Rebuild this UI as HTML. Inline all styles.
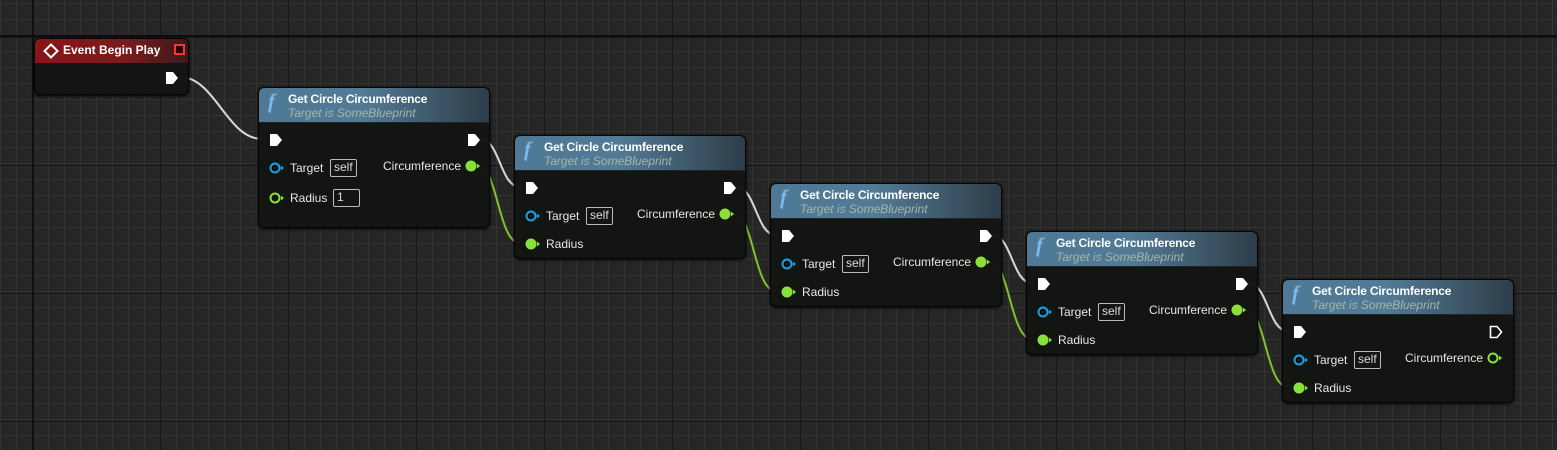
<!DOCTYPE html>
<html><head><meta charset="utf-8"><style>
*{margin:0;padding:0;box-sizing:border-box}
body{width:1557px;height:450px;overflow:hidden;background:#262626;position:relative;font-family:"Liberation Sans",sans-serif;
background-image:
linear-gradient(90deg,#0e0e0e 0,#0e0e0e 2px,transparent 2px),
linear-gradient(0deg,#0e0e0e 0,#0e0e0e 2px,transparent 2px),
linear-gradient(90deg,#171717 1px,transparent 1px),
linear-gradient(0deg,transparent 127px,#171717 127px),
linear-gradient(90deg,#333 1px,transparent 1px),
linear-gradient(0deg,#333 1px,transparent 1px);
background-size:2px 450px,1557px 2px,128px 128px,128px 128px,16px 16px,16px 16px;
background-position:32px 0,0 35px,32px 0,0 37px,0 4px,0 4px;
background-repeat:no-repeat,no-repeat,repeat,repeat,repeat,repeat;}
.n{position:absolute;width:232px;height:124px;background:rgba(19,21,19,.97);border:1px solid #050505;border-radius:6px;box-shadow:0 1px 3px #000}
.n .h{height:35px;border-radius:5px 5px 0 0;background:linear-gradient(90deg,#4e7895 0%,#537b96 45%,#2d3d48 100%);position:relative;border-bottom:1px solid #222}
.n .f{position:absolute;left:9px;top:1px;color:#7ab8ee;font-family:"Liberation Serif",serif;font-style:italic;font-size:21px;font-weight:bold}
.n .t{position:absolute;left:29px;top:4px;color:#fff;font-size:12px;font-weight:bold;letter-spacing:-.2px}
.n .s{position:absolute;left:29px;top:18px;color:#a5b6a5;font-size:12px;font-style:italic}
.l{position:absolute;color:#e6e6e6;font-size:12px}
.b{position:absolute;border:1px solid #bbb;color:#ddd;font-size:12px;height:18px;line-height:15px;padding:0 3px;border-radius:2px}
svg.p{position:absolute}
</style></head><body>
<svg width="1557" height="450" style="position:absolute;left:0;top:0">
<g fill="none" stroke-width="2">
<path d="M180 77 C215 77,227 139,262 139" stroke="#d8d8d8"/>
<path d="M480 139 C500 139,500 187,520 187" stroke="#d8d8d8"/>
<path d="M736 187 C756 187,756 235,776 235" stroke="#d8d8d8"/>
<path d="M992 235 C1012 235,1012 283,1032 283" stroke="#d8d8d8"/>
<path d="M1248 283 C1268 283,1268 331,1288 331" stroke="#d8d8d8"/>
<path d="M478 166 C498 166,498 243,520 243" stroke="#7fc42a"/>
<path d="M734 214 C754 214,754 291,776 291" stroke="#7fc42a"/>
<path d="M990 262 C1010 262,1010 339,1032 339" stroke="#7fc42a"/>
<path d="M1246 310 C1266 310,1266 387,1288 387" stroke="#7fc42a"/>
</g></svg>

<div class="n" style="left:34px;top:38px;width:155px;height:57px">
<div style="height:24px;border-radius:5px 5px 0 0;background:linear-gradient(90deg,#8a1418,#7a1a1c 60%,#3a1a1a)"></div>
<svg class="p" style="left:8px;top:4px" width="16" height="16"><path d="M8 1.5L14.5 8 8 14.5 1.5 8Z" fill="none" stroke="#fff" stroke-width="2"/></svg>
<div class="l" style="left:28px;top:4px;font-weight:bold;color:#fff">Event Begin Play</div>
<div style="position:absolute;left:139px;top:5px;width:11px;height:11px;border:2px solid #f33;background:#200"></div>
<svg class="p" style="left:130px;top:32px" width="14" height="14"><path d="M1 1H8L13 7 8 13H1Z" fill="#fff"/></svg>
</div>

<div class="n" style="left:258px;top:87px;height:141px">
<div class="h"><div class="f">f</div><div class="t">Get Circle Circumference</div><div class="s">Target is SomeBlueprint</div></div>
<svg class="p" style="left:10px;top:45px" width="14" height="14"><path d="M1 1H8L13 7 8 13H1Z" fill="#fff"/></svg>
<svg class="p" style="left:208px;top:45px" width="14" height="14"><path d="M1 1H8L13 7 8 13H1Z" fill="#fff"/></svg>
<svg class="p" style="left:10px;top:74px" width="16" height="12"><circle cx="6" cy="6" r="4.5" fill="none" stroke="#1d9fe6" stroke-width="2"/><path d="M12 3.5L15 6 12 8.5Z" fill="#1d9fe6"/></svg>
<div class="l" style="left:31px;top:73px">Target</div><div class="b" style="left:71px;top:71px">self</div>
<svg class="p" style="left:10px;top:104px" width="16" height="12"><circle cx="6" cy="6" r="4.5" fill="none" stroke="#8ae03a" stroke-width="2"/><path d="M12 3.5L15 6 12 8.5Z" fill="#8ae03a"/></svg>
<div class="l" style="left:31px;top:103px">Radius</div><div class="b" style="left:74px;top:101px;width:27px">1</div>
<div class="l" style="left:124px;top:71px">Circumference</div>
<svg class="p" style="left:206px;top:72px" width="16" height="12"><circle cx="6" cy="6" r="5.5" fill="#8ae03a"/><path d="M12 3.5L15 6 12 8.5Z" fill="#8ae03a"/></svg>
</div>

<div class="n" style="left:514px;top:135px">
<div class="h"><div class="f">f</div><div class="t">Get Circle Circumference</div><div class="s">Target is SomeBlueprint</div></div>
<svg class="p" style="left:10px;top:45px" width="14" height="14"><path d="M1 1H8L13 7 8 13H1Z" fill="#fff"/></svg>
<svg class="p" style="left:208px;top:45px" width="14" height="14"><path d="M1 1H8L13 7 8 13H1Z" fill="#fff"/></svg>
<svg class="p" style="left:10px;top:74px" width="16" height="12"><circle cx="6" cy="6" r="4.5" fill="none" stroke="#1d9fe6" stroke-width="2"/><path d="M12 3.5L15 6 12 8.5Z" fill="#1d9fe6"/></svg>
<div class="l" style="left:31px;top:73px">Target</div><div class="b" style="left:71px;top:71px">self</div>
<svg class="p" style="left:10px;top:102px" width="16" height="12"><circle cx="6" cy="6" r="5.5" fill="#8ae03a"/><path d="M12 3.5L15 6 12 8.5Z" fill="#8ae03a"/></svg>
<div class="l" style="left:31px;top:101px">Radius</div>
<div class="l" style="left:122px;top:71px">Circumference</div>
<svg class="p" style="left:204px;top:72px" width="16" height="12"><circle cx="6" cy="6" r="5.5" fill="#8ae03a"/><path d="M12 3.5L15 6 12 8.5Z" fill="#8ae03a"/></svg>
</div>
<div class="n" style="left:770px;top:183px">
<div class="h"><div class="f">f</div><div class="t">Get Circle Circumference</div><div class="s">Target is SomeBlueprint</div></div>
<svg class="p" style="left:10px;top:45px" width="14" height="14"><path d="M1 1H8L13 7 8 13H1Z" fill="#fff"/></svg>
<svg class="p" style="left:208px;top:45px" width="14" height="14"><path d="M1 1H8L13 7 8 13H1Z" fill="#fff"/></svg>
<svg class="p" style="left:10px;top:74px" width="16" height="12"><circle cx="6" cy="6" r="4.5" fill="none" stroke="#1d9fe6" stroke-width="2"/><path d="M12 3.5L15 6 12 8.5Z" fill="#1d9fe6"/></svg>
<div class="l" style="left:31px;top:73px">Target</div><div class="b" style="left:71px;top:71px">self</div>
<svg class="p" style="left:10px;top:102px" width="16" height="12"><circle cx="6" cy="6" r="5.5" fill="#8ae03a"/><path d="M12 3.5L15 6 12 8.5Z" fill="#8ae03a"/></svg>
<div class="l" style="left:31px;top:101px">Radius</div>
<div class="l" style="left:122px;top:71px">Circumference</div>
<svg class="p" style="left:204px;top:72px" width="16" height="12"><circle cx="6" cy="6" r="5.5" fill="#8ae03a"/><path d="M12 3.5L15 6 12 8.5Z" fill="#8ae03a"/></svg>
</div>
<div class="n" style="left:1026px;top:231px">
<div class="h"><div class="f">f</div><div class="t">Get Circle Circumference</div><div class="s">Target is SomeBlueprint</div></div>
<svg class="p" style="left:10px;top:45px" width="14" height="14"><path d="M1 1H8L13 7 8 13H1Z" fill="#fff"/></svg>
<svg class="p" style="left:208px;top:45px" width="14" height="14"><path d="M1 1H8L13 7 8 13H1Z" fill="#fff"/></svg>
<svg class="p" style="left:10px;top:74px" width="16" height="12"><circle cx="6" cy="6" r="4.5" fill="none" stroke="#1d9fe6" stroke-width="2"/><path d="M12 3.5L15 6 12 8.5Z" fill="#1d9fe6"/></svg>
<div class="l" style="left:31px;top:73px">Target</div><div class="b" style="left:71px;top:71px">self</div>
<svg class="p" style="left:10px;top:102px" width="16" height="12"><circle cx="6" cy="6" r="5.5" fill="#8ae03a"/><path d="M12 3.5L15 6 12 8.5Z" fill="#8ae03a"/></svg>
<div class="l" style="left:31px;top:101px">Radius</div>
<div class="l" style="left:122px;top:71px">Circumference</div>
<svg class="p" style="left:204px;top:72px" width="16" height="12"><circle cx="6" cy="6" r="5.5" fill="#8ae03a"/><path d="M12 3.5L15 6 12 8.5Z" fill="#8ae03a"/></svg>
</div>
<div class="n" style="left:1282px;top:279px">
<div class="h"><div class="f">f</div><div class="t">Get Circle Circumference</div><div class="s">Target is SomeBlueprint</div></div>
<svg class="p" style="left:10px;top:45px" width="14" height="14"><path d="M1 1H8L13 7 8 13H1Z" fill="#fff"/></svg>
<svg class="p" style="left:206px;top:45px" width="14" height="14"><path d="M1.5 1.5H8L12.5 7 8 12.5H1.5Z" fill="none" stroke="#fff" stroke-width="1.6"/></svg>
<svg class="p" style="left:10px;top:74px" width="16" height="12"><circle cx="6" cy="6" r="4.5" fill="none" stroke="#1d9fe6" stroke-width="2"/><path d="M12 3.5L15 6 12 8.5Z" fill="#1d9fe6"/></svg>
<div class="l" style="left:31px;top:73px">Target</div><div class="b" style="left:71px;top:71px">self</div>
<svg class="p" style="left:10px;top:102px" width="16" height="12"><circle cx="6" cy="6" r="5.5" fill="#8ae03a"/><path d="M12 3.5L15 6 12 8.5Z" fill="#8ae03a"/></svg>
<div class="l" style="left:31px;top:101px">Radius</div>
<div class="l" style="left:122px;top:71px">Circumference</div>
<svg class="p" style="left:204px;top:72px" width="16" height="12"><circle cx="6" cy="6" r="4.5" fill="none" stroke="#8ae03a" stroke-width="2"/><path d="M12 3.5L15 6 12 8.5Z" fill="#8ae03a"/></svg>
</div>
</body></html>
